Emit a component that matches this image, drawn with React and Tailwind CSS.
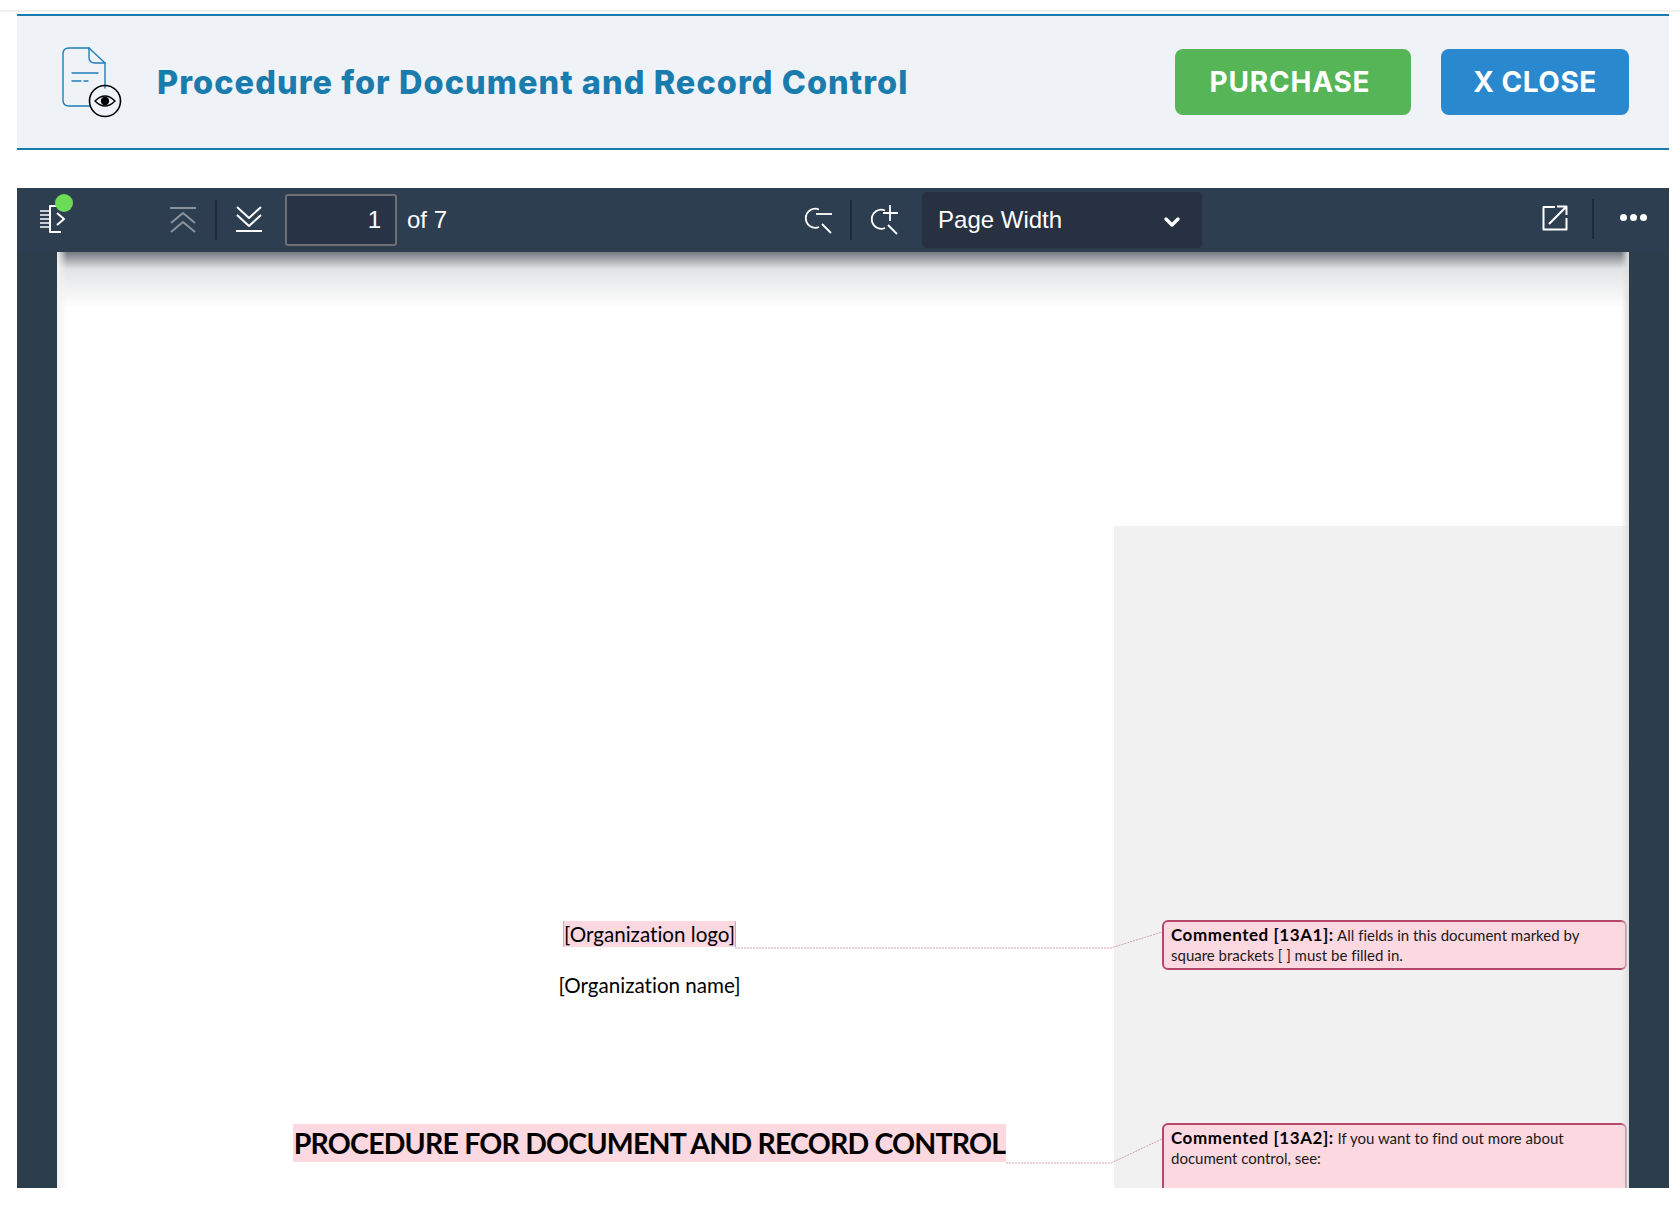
import React from "react";

const IconStroke = { fill: "none", strokeLinecap: "round", strokeLinejoin: "round" };

function DocEyeIcon() {
  return (
    <svg width="64" height="72" viewBox="0 0 64 72" className="shrink-0">
      <g {...IconStroke} stroke="#1f7fb5" strokeWidth="1.4">
        <path d="M28 2 H8 Q2 2 2 8 V54 Q2 60 8 60 H29" />
        <path d="M28 2 L44 17 V42" />
        <path d="M28 2 V11 Q28 17 34 17 H44" />
        <path d="M11 27 H37" />
        <path d="M11 35 H20 M23 35 H27" />
      </g>
      <circle cx="44" cy="55" r="15.5" fill="none" stroke="#000" strokeWidth="1.6" />
      <path d="M34 55 Q44 45 54 55 Q44 65 34 55 Z" fill="none" stroke="#000" strokeWidth="1.4" />
      <circle cx="44" cy="55" r="4.2" fill="#000" />
    </svg>
  );
}

function Sep() {
  return <div className="w-[2px] h-[40px] bg-[#1f2b38]" />;
}

export default function App() {
  return (
    <div className="w-[1680px] h-[1208px] bg-white overflow-hidden pt-[10px] font-['Liberation_Sans',sans-serif]">
      <div className="h-[2px] bg-[#f0f0f0]" />
      <header className="mt-[2px] ml-[17px] mr-[11px] h-[136px] box-border border-y-2 border-[#1a7bad] bg-[#eff3f8] flex items-center pl-[44px]">
        <div className="-mt-[1px]"><DocEyeIcon /></div>
        <h1 className="ml-[32px] mt-[2px] text-[32.5px] leading-none font-extrabold tracking-[1.05px] text-[#1a7bad] font-['Inter',sans-serif]">
          Procedure for Document and Record Control
        </h1>
        <button className="ml-auto w-[236px] h-[66px] pr-[6px] rounded-lg bg-[#55b557] text-white text-[28px] font-bold tracking-[0.8px] font-['Inter',sans-serif]">
          PURCHASE
        </button>
        <button className="ml-[30px] mr-[40px] w-[188px] h-[66px] rounded-lg bg-[#2a88cf] text-white text-[28px] font-bold tracking-[0.5px] font-['Inter',sans-serif]">
          X CLOSE
        </button>
      </header>

      <section className="mt-[38px] ml-[17px] mr-[11px] h-[1000px] bg-[#2c3e4c] flex flex-col overflow-hidden">
        <div className="h-[64px] shrink-0 bg-[#2d3e50] flex items-center relative z-10 text-white text-[24px]">
          <div className="relative ml-[22px] w-[28px] h-[36px] -mt-[2px]">
            <svg width="28" height="36" viewBox="0 0 28 36" className="absolute left-0 top-0">
              <g {...IconStroke} stroke="#fff" strokeWidth="2" strokeLinecap="butt">
                <path d="M1 10 H10 M1 14 H10 M1 18 H10 M1 22 H10 M1 26 H10" strokeWidth="1.6" />
                <path d="M18 5 H11 V31 H22" />
                <path d="M18 12 L25 18 L18 24" />
              </g>
            </svg>
            <div className="absolute left-[16px] -top-[7px] w-[18px] h-[18px] rounded-full bg-[#6cdb55]" />
          </div>
          <svg width="28" height="28" viewBox="0 0 28 28" className="ml-[102px] -mt-[1px]">
            <g {...IconStroke} stroke="#8a939d" strokeWidth="2" strokeLinecap="butt">
              <path d="M1 2 H27" />
              <path d="M2 17 L14 7 L26 17" />
              <path d="M2 26 L14 16 L26 26" />
            </g>
          </svg>
          <div className="ml-[18px]"><Sep /></div>
          <svg width="28" height="28" viewBox="0 0 28 28" className="ml-[18px] -mt-[2px]">
            <g {...IconStroke} stroke="#fff" strokeWidth="2" strokeLinecap="butt">
              <path d="M2 2 L14 13 L26 2" />
              <path d="M2 10 L14 21 L26 10" />
              <path d="M1 26 H27" />
            </g>
          </svg>
          <div className="ml-[22px] w-[112px] h-[52px] box-border border-2 border-[#6c6f73] rounded-[3px] bg-[#283445] flex items-center justify-end pr-[14px]">
            1
          </div>
          <span className="ml-[10px]">of 7</span>

          <svg width="30" height="30" viewBox="0 0 30 30" className="ml-[357px] -mt-[1px]">
            <g {...IconStroke} stroke="#fff" strokeWidth="1.8" strokeLinecap="butt">
              <path d="M15 4.5 A9.5 9.5 0 1 0 15 22" />
              <path d="M12 9 H28" />
              <path d="M18 19 L27 28" />
            </g>
          </svg>
          <div className="ml-[16px]"><Sep /></div>
          <svg width="30" height="32" viewBox="0 0 30 32" className="ml-[18px] -mt-[3px]">
            <g {...IconStroke} stroke="#fff" strokeWidth="1.8" strokeLinecap="butt">
              <path d="M15 7.5 A9.5 9.5 0 1 0 15 25" />
              <path d="M13 10 H28 M20 2 V18" />
              <path d="M18 22 L27 31" />
            </g>
          </svg>
          <div className="ml-[22px] w-[280px] h-[56px] rounded-[4px] bg-[#283142] flex items-center pl-[16px]">
            <span>Page Width</span>
            <svg width="18" height="12" viewBox="0 0 18 12" className="ml-auto mr-[21px] mt-[3px]">
              <path d="M3 3 L9 9 L15 3" fill="none" stroke="#fff" strokeWidth="3.4" strokeLinecap="round" strokeLinejoin="round" />
            </svg>
          </div>

          <svg width="26" height="26" viewBox="0 0 26 26" className="ml-[340px] -mt-[4px]">
            <g {...IconStroke} stroke="#fff" strokeWidth="2" strokeLinecap="butt">
              <path d="M13 2 H1.5 V24.5 H24.5 V13" />
              <path d="M7 19 L24 2 M15 1.5 H24.5 V10" />
            </g>
          </svg>
          <div className="ml-[24px] -mt-[2px]"><Sep /></div>
          <div className="ml-[26px] -mt-[5px] flex gap-[3px]">
            <div className="w-[7px] h-[7px] rounded-full bg-white" />
            <div className="w-[7px] h-[7px] rounded-full bg-white" />
            <div className="w-[7px] h-[7px] rounded-full bg-white" />
          </div>
        </div>

        <div className="relative mx-[40px] flex-1 bg-white flex overflow-hidden font-['Lato',sans-serif] text-black [font-variant-ligatures:none]">
          <div className="absolute inset-x-0 top-0 h-[56px] bg-linear-to-b from-[#767b82] via-[#e2e3e5] via-30% to-transparent" />
          <div className="absolute inset-y-0 left-0 w-[10px] bg-linear-to-r from-[#f2f2f2] to-transparent" />
          <div className="absolute inset-y-0 right-0 w-[8px] bg-linear-to-l from-[#e0e0e0] to-transparent z-10" />

          <div className="w-[1057px] shrink-0 pt-[669px] pl-[236px]">
            <div className="w-[713px] flex flex-col items-center">
              <div className="h-[26px] bg-[#fcd8e0] text-[20.6px] leading-[26px] border-x border-[#e0a0b0]">[Organization logo]</div>
              <div className="mt-[25px] text-[20.6px] leading-[26px]">[Organization name]</div>
              <div className="mt-[126px] w-[713px] h-[38px] bg-[#fcd8e0] text-[28.5px] leading-[38px] font-bold tracking-[-0.8px] text-center whitespace-nowrap">PROCEDURE FOR DOCUMENT AND RECORD CONTROL</div>
            </div>
          </div>

          <aside className="mt-[274px] flex-1 bg-[#f1f1f1] pl-[48px] pr-[2px] pt-[394px]">
            <div className="h-[50px] rounded-[6px] border-2 border-[#b5486a] bg-[#fcd8e0] pl-[7px] pr-[14px] pt-[3px] text-[15px] leading-[20px] text-[#1a1a1a]">
              <b className="text-black text-[17px] tracking-[0.55px]">Commented [13A1]:</b> All fields in this document marked by square brackets [ ] must be filled in.
            </div>
            <div className="mt-[153px] h-[90px] rounded-[6px] border-2 border-[#b5486a] bg-[#fcd8e0] pl-[7px] pr-[14px] pt-[3px] text-[15px] leading-[20px] text-[#1a1a1a]">
              <b className="text-black text-[17px] tracking-[0.55px]">Commented [13A2]:</b> If you want to find out more about document control, see:
            </div>
          </aside>

          <svg className="absolute inset-0 pointer-events-none" width="1572" height="935" viewBox="0 0 1572 935">
            <path d="M678 696 H1054 L1105 680" fill="none" stroke="#d9a0b0" strokeWidth="1" strokeDasharray="2 1" />
            <path d="M949 911 H1054 L1105 887" fill="none" stroke="#d9a0b0" strokeWidth="1" strokeDasharray="2 1" />
          </svg>
        </div>
      </section>
    </div>
  );
}
